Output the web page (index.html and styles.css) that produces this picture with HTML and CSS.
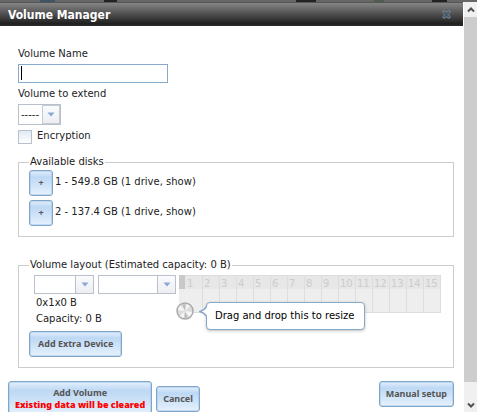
FILE: index.html
```html
<!DOCTYPE html>
<html lang="en">
<head>
<meta charset="utf-8">
<title>Volume Manager</title>
<link rel="stylesheet" href="styles.css">
</head>
<body>
<div class="backdrop"></div>
<div class="window">
  <main class="dialog">
    <header class="titlebar">
      <h1>Volume Manager</h1>
      <button class="close" type="button" aria-label="Close">
        <svg width="9" height="9" viewBox="0 0 9 9"><path d="M1 1h2.200L4.500 2.600 5.800 1H8v1.500L6.200 4.500 8 6.500V8H5.800L4.500 6.400 3.200 8H1V6.500L2.800 4.500 1 2.500z" fill="#40566a" stroke="#8796a2" stroke-width=".8"/></svg>
      </button>
    </header>
    <form class="form">
      <label class="label" for="name">Volume Name</label>
      <div class="name-box"><input class="name" id="name" type="text"><span class="caret"></span></div>
      <label class="label" for="extend">Volume to extend</label>
      <div class="select extend">
        <select id="extend"><option>-----</option></select>
        <span class="drop"><svg width="8" height="5" viewBox="0 0 8 5"><path d="M.5.500h7L4 4.500z"/></svg></span>
      </div>
      <div class="check"><input type="checkbox" id="enc"><label for="enc">Encryption</label></div>

      <fieldset class="disks">
        <legend>Available disks</legend>
        <div class="disk"><button class="btn plus" type="button" aria-label="Add disk 1">+</button><span>1 - 549.8 GB (1 drive, show)</span></div>
        <div class="disk"><button class="btn plus" type="button" aria-label="Add disk 2">+</button><span>2 - 137.4 GB (1 drive, show)</span></div>
      </fieldset>

      <fieldset class="layout">
        <legend>Volume layout (Estimated capacity: 0 B)</legend>
        <div class="row">
          <div class="left">
            <div class="selects">
              <div class="select type">
                <select aria-label="Layout type"><option></option></select>
                <span class="drop"><svg width="8" height="5" viewBox="0 0 8 5"><path d="M.5.500h7L4 4.500z"/></svg></span>
              </div>
              <div class="select purpose">
                <select aria-label="Device purpose"><option></option></select>
                <span class="drop"><svg width="8" height="5" viewBox="0 0 8 5"><path d="M.5.500h7L4 4.500z"/></svg></span>
              </div>
            </div>
            <p class="info">0x1x0 B</p>
            <p class="info">Capacity: 0 B</p>
          </div>
          <div class="slots">
            <div class="bar"></div>
            <ol class="cells">
              <li>1</li><li>2</li><li>3</li><li>4</li><li>5</li><li>6</li><li>7</li><li>8</li><li>9</li><li>10</li><li>11</li><li>12</li><li>13</li><li>14</li><li>15</li>
            </ol>
            <svg class="knob" width="18" height="18" viewBox="0 0 18 18">
              <circle cx="9" cy="9" r="8" fill="#dcdcdc" stroke="#ababab" stroke-width="1.500"/>
              <path d="M9 9 2 8A7 7 0 0 1 4.500 3.600zM9 9 16 10A7 7 0 0 1 13.500 14.400zM9 9 10.500 2.200A7 7 0 0 1 13.800 4zM9 9 7.500 15.800A7 7 0 0 1 4.200 14z" fill="#f6f6f6"/>
              <path d="M9 9 6.500 2.500 9.500 2zM9 9 11.500 15.500 8.500 16z" fill="#bbb"/>
            </svg>
            <div class="tip" role="tooltip">
              <svg class="tail" width="8" height="11" viewBox="0 0 8 11"><path d="M8 0C6.500 3 4 4.500 1 5.500 4 6.500 6.500 8 8 11" fill="#fff" stroke="#85a8cb" stroke-width="1.500"/></svg>
              Drag and drop this to resize
            </div>
          </div>
        </div>
        <button class="btn" type="button">Add Extra Device</button>
      </fieldset>

      <div class="actions">
        <button class="btn add" type="button">Add Volume<strong>Existing data will be cleared</strong></button>
        <button class="btn cancel" type="button">Cancel</button>
        <button class="btn manual" type="button">Manual setup</button>
      </div>
    </form>
  </main>
  <div class="scroll" aria-hidden="true">
    <div class="arrow"><svg width="8" height="7" viewBox="0 0 8 7"><path d="M1 5.500 4 2.500 7 5.500"/></svg></div>
    <div class="thumb"></div>
    <div class="arrow end"><svg width="8" height="7" viewBox="0 0 8 7"><path d="M1 1.500 4 4.500 7 1.500"/></svg></div>
  </div>
</div>
</body>
</html>
```
FILE: styles.css
```css
* { box-sizing: border-box; }
body {
  margin: 0;
  height: 100vh;
  overflow: hidden;
  display: flex;
  flex-direction: column;
  background: #fff;
  color: #222;
  font: 10px/16px "DejaVu Sans", Verdana, sans-serif;
}
button, input, select { font: inherit; color: inherit; margin: 0; padding: 0; }
svg { display: block; }
.backdrop {
  flex: none;
  height: 2px;
  background: linear-gradient(90deg, #666 0 40px, #3f5566 40px 55px, #666 55px 104px, #222 104px 117px, #666 117px 296px, #222 296px 316px, #666 316px 374px, #4e5b4e 374px 384px, #666 384px 432px, #222 432px 447px, #666 447px);
}
.window { flex: 1; min-height: 0; display: grid; grid-template-columns: minmax(0, 1fr) 13px; }
.dialog { min-width: 0; overflow: hidden; }
.titlebar {
  display: flex;
  align-items: center;
  justify-content: space-between;
  height: 24px;
  margin-right: 1px;
  padding: 0 12px 0 8px;
  border-top: 1px solid #555;
  background: linear-gradient(#858585, #202020 90%, #2c2c2c);
}
h1 { margin: 0; color: #fff; font: bold 12px/16px "DejaVu Sans Condensed", Tahoma, sans-serif; }
.close { border: 0; background: none; }
.form { padding: 20px 10px 0 18px; }
.label { display: block; }
.name-box { display: grid; width: 150px; margin: 2px 0 3px; }
.name {
  grid-area: 1 / 1;
  width: 100%;
  height: 19px;
  padding: 0 4px;
  border: 1px solid #86aace;
  background: #fff;
  outline: 0;
}
.caret { grid-area: 1 / 1; width: 1px; height: 14px; margin: 2px 3px; background: #000; }
.select {
  display: grid;
  grid-template-columns: minmax(0, 1fr) 18px;
  height: 19px;
  border: 1px solid #b9c0cc;
  background: #fff;
}
.select select {
  grid-area: 1 / 1 / 2 / 3;
  appearance: none;
  width: 100%;
  padding-left: 2px;
  border: 0;
  background: none;
}
.drop {
  grid-area: 1 / 2;
  display: grid;
  place-items: center;
  border-left: 1px solid #b9c0cc;
  background: linear-gradient(#fafbfd, #eceef2);
  pointer-events: none;
}
.drop path { fill: #8ba6d3; }
.extend { width: 43px; height: 21px; margin: 2px 0 3px; }
.extend .drop { border: 1px solid #c5cad3; }
.check { display: flex; gap: 5px; height: 15px; align-items: center; }
.check input {
  appearance: none;
  width: 14px;
  height: 14px;
  margin-top: 2px;
  border: 1px solid #b9c0cc;
  background: linear-gradient(#dfeaf5, #fff);
}
fieldset { min-width: 0; margin: 0; border: 1px solid #ccc; }
legend { padding: 0 1px; }
.disks { margin-top: 11px; padding: 0 10px; }
.disk { display: flex; align-items: center; gap: 2px; margin-bottom: 4px; }
.disk:last-child { margin-bottom: 10px; }
.disk span { margin-bottom: 2px; }
.btn {
  height: 26px;
  padding: 0 8px;
  border: 1px solid #7fa5c8;
  border-radius: 3px;
  background: linear-gradient(#e3effb, #bdd8f4 25%, #e6f1fc);
  box-shadow: inset 0 0 0 1px rgba(160, 195, 230, .5);
  color: #555;
  font: bold 9px/12px "Noto Sans", "Open Sans", sans-serif;
  white-space: nowrap;
}
.plus { width: 24px; padding: 0; }
.layout { margin-top: 20px; padding: 2px 10px 10px; }
.row { display: flex; gap: 3px; padding-left: 5px; margin-bottom: 4px; }
.left { flex: none; }
.selects { display: flex; gap: 4px; margin-bottom: 1px; }
.type { width: 60px; }
.purpose { width: 78px; }
.info { margin: 0 0 0 2px; }
.slots { position: relative; flex: none; display: flex; height: 38px; }
.bar { width: 6px; background: linear-gradient(#c8c8c8 14px, #eee 14px); }
.cells {
  display: grid;
  grid-template-columns: repeat(15, 17px);
  margin: 0;
  padding: 0;
  list-style: none;
  color: #ccc;
  border: solid #ddd;
  border-width: 1px 1px 1px 0;
  background: linear-gradient(#e7e7e7 13px, #eee 13px);
}
.cells li { padding-left: 1px; border-left: 1px solid #ddd; }
.cells li:first-child { border-left-color: transparent; }
.knob { position: absolute; left: -3px; top: 27px; }
.tip {
  position: absolute;
  left: 27px;
  top: 27px;
  padding: 5px 10px 5px 8px;
  border: 1px solid #85a8cb;
  border-radius: 4px;
  background: #fff;
  box-shadow: 0 1px 3px rgba(0, 0, 0, .25);
  color: #000;
  white-space: nowrap;
}
.tail { position: absolute; left: -8px; top: 3px; }
.actions { display: flex; align-items: flex-start; gap: 4px; margin: 13px 0 0 -10px; }
.actions .btn { padding: 0 6px; }
.add { height: 36px; }
.add strong { display: block; color: #f00; }
.actions .cancel { margin-top: 5px; }
.manual { margin-left: auto; }
.scroll { display: flex; flex-direction: column; background: #f0f0f0; }
.arrow { height: 15px; display: grid; place-items: center; }
.arrow path { fill: none; stroke: #505050; stroke-width: 2; }
.thumb { flex: 1; background: #cdcdcd; }
.end { height: 30px; align-items: end; padding-bottom: 3px; }
```
